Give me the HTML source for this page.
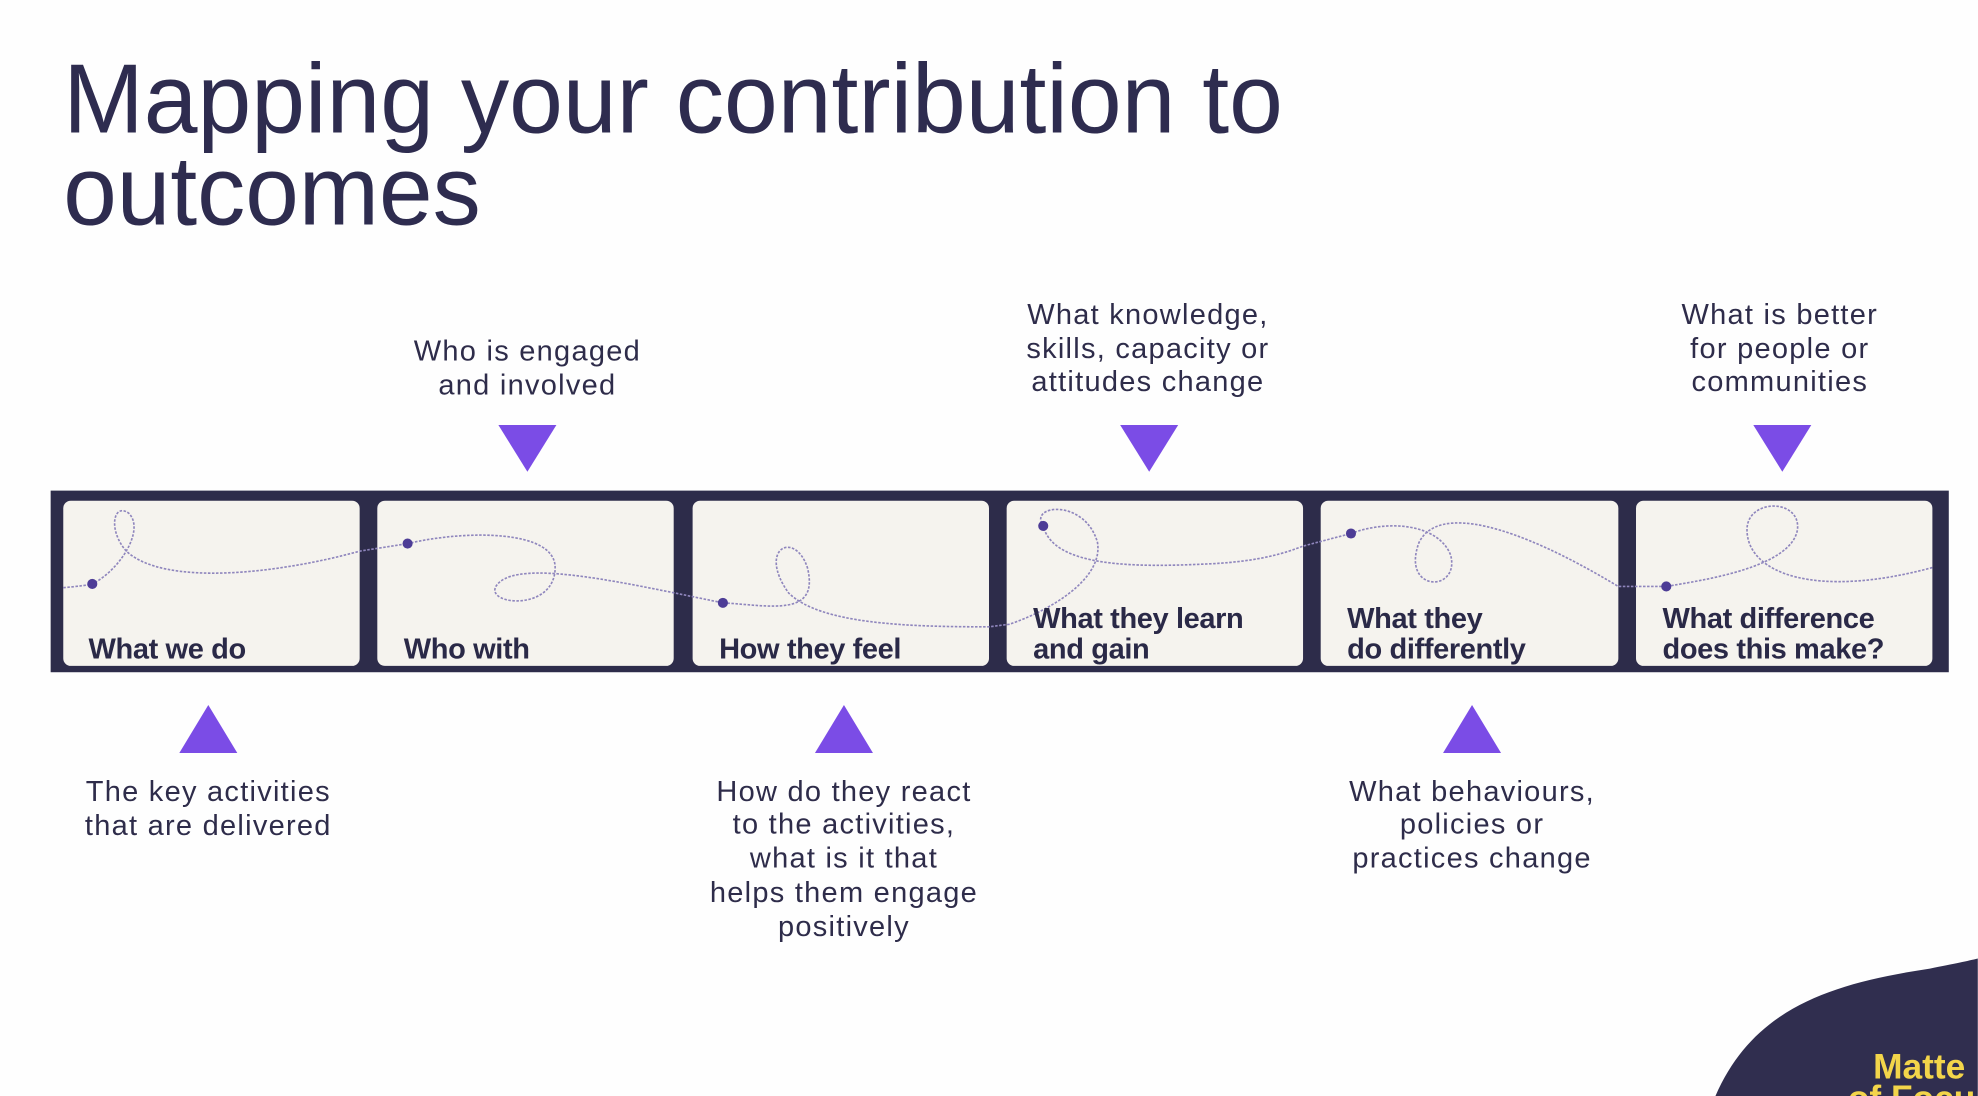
<!DOCTYPE html>
<html><head><meta charset="utf-8"><style>
html,body{margin:0;padding:0;background:#fff;width:1978px;height:1096px;overflow:hidden}
svg{display:block}
text{font-family:"Liberation Sans",sans-serif}
</style></head><body>
<svg width="1978" height="1096" viewBox="0 0 1568 869" xmlns="http://www.w3.org/2000/svg">
<rect width="1568" height="869" fill="#fefefe"/>
<g fill="#2e2c4f" font-size="78">
<text x="50" y="105" textLength="967" lengthAdjust="spacingAndGlyphs">Mapping your contribution to</text>
<text x="50" y="178" textLength="331" lengthAdjust="spacingAndGlyphs">outcomes</text>
</g>
<rect x="40" y="389" width="1505" height="144" fill="#2d2c4a"/>
<g fill="#f5f3ee">
<rect x="50" y="397" width="235" height="131" rx="6"/>
<rect x="299" y="397" width="235" height="131" rx="6"/>
<rect x="549" y="397" width="235" height="131" rx="6"/>
<rect x="798" y="397" width="235" height="131" rx="6"/>
<rect x="1047" y="397" width="236" height="131" rx="6"/>
<rect x="1297" y="397" width="235" height="131" rx="6"/>
</g>
<path fill="none" stroke="#8f86bd" stroke-width="1.3" stroke-dasharray="2 1.2"
d="M50 466 C60 465 70 464 73 463 C95 452 115 420 102 407 C90 398 85 420 100 437 C130 465 220 455 285 437
 L323 431 C370 420 440 420 440 450 C440 485 385 480 393 465 C405 445 470 457 534 470
 L573 478 C610 480 650 490 640 450 C630 420 600 435 625 470 C650 495 720 497 784 497
 L800 495 C830 485 875 460 870 430 C860 395 815 400 827 417 C835 450 900 450 960 447 C1000 445 1020 438 1033 433
 L1071 423 C1100 412 1140 415 1150 440 C1158 470 1110 470 1125 430 C1140 400 1200 415 1283 465
 L1321 465 C1350 460 1420 450 1425 420 C1428 395 1385 395 1385 420 C1385 455 1440 475 1532 450"/>
<g fill="#4d3c96">
<circle cx="73" cy="463" r="4"/><circle cx="323" cy="431" r="4"/><circle cx="573" cy="478" r="4"/>
<circle cx="827" cy="417" r="4"/><circle cx="1071" cy="423" r="4"/><circle cx="1321" cy="465" r="4"/>
</g>
<g fill="#2a2947" font-size="23" font-weight="bold" letter-spacing="-0.3">
<text x="70" y="522">What we do</text>
<text x="320" y="522">Who with</text>
<text x="570" y="522">How they feel</text>
<text x="819" y="498">What they learn</text><text x="819" y="522">and gain</text>
<text x="1068" y="498">What they</text><text x="1068" y="522">do differently</text>
<text x="1318" y="498">What difference</text><text x="1318" y="522">does this make?</text>
</g>
<g fill="#7b4ce6">
<polygon points="395,337 441,337 418,374"/>
<polygon points="888,337 934,337 911,374"/>
<polygon points="1390,337 1436,337 1413,374"/>
<polygon points="142,597 188,597 165,559"/>
<polygon points="646,597 692,597 669,559"/>
<polygon points="1144,597 1190,597 1167,559"/>
</g>
<g fill="#2e2c4a" font-size="23" text-anchor="middle" letter-spacing="1">
<text x="418" y="286">Who is engaged</text><text x="418" y="313">and involved</text>
<text x="910" y="257">What knowledge,</text><text x="910" y="284">skills, capacity or</text><text x="910" y="310">attitudes change</text>
<text x="1411" y="257">What is better</text><text x="1411" y="284">for people or</text><text x="1411" y="310">communities</text>
<text x="165" y="635">The key activities</text><text x="165" y="662">that are delivered</text>
<text x="669" y="635">How do they react</text><text x="669" y="661">to the activities,</text><text x="669" y="688">what is it that</text><text x="669" y="715">helps them engage</text><text x="669" y="742">positively</text>
<text x="1167" y="635">What behaviours,</text><text x="1167" y="661">policies or</text><text x="1167" y="688">practices change</text>
</g>
<path d="M1360 869 C1390 800 1450 780 1530 768 C1550 764 1560 762 1568 760 L1568 869 Z" fill="#302e4f"/>
<g fill="#f3d54a" font-size="28" font-weight="bold">
<text x="1485" y="855">Matte</text>
<text x="1465" y="880">of Focu</text>
</g>
</svg>
</body></html>
